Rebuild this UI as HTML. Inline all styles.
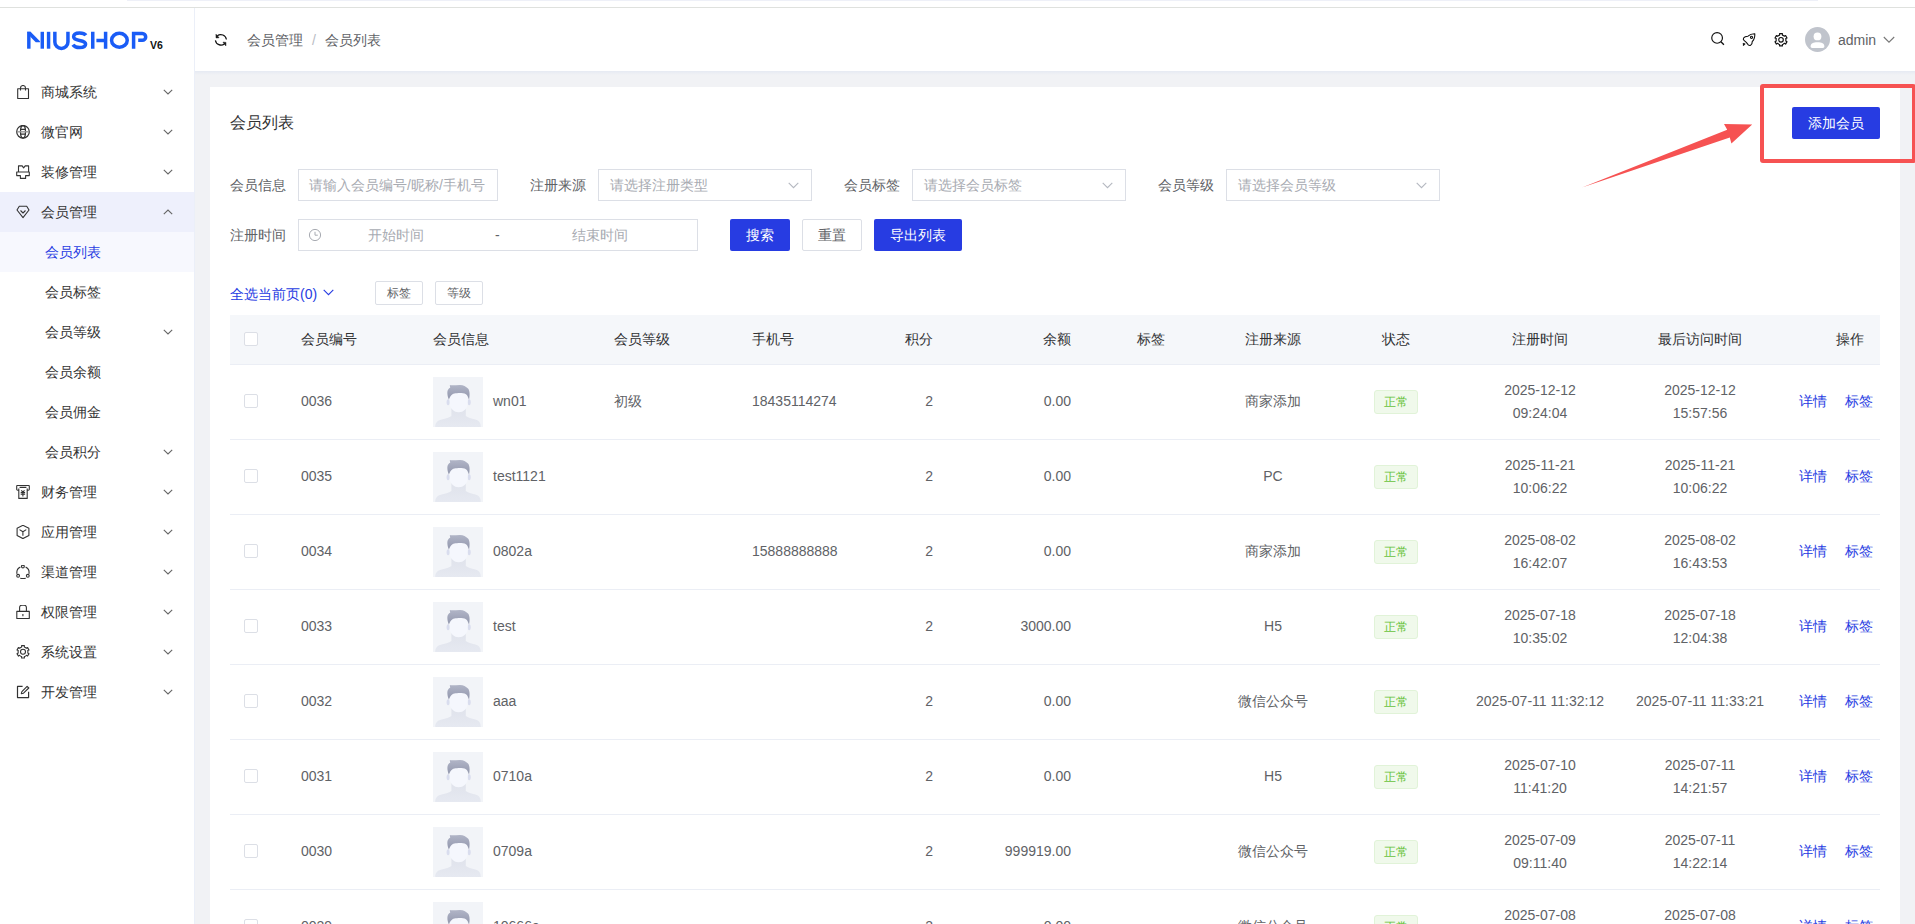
<!DOCTYPE html>
<html><head><meta charset="utf-8"><title>会员列表</title><style>
*{box-sizing:border-box;margin:0;padding:0}
html,body{width:1915px;height:924px;overflow:hidden}
body{position:relative;background:#f1f2f5;font-family:"Liberation Sans",sans-serif;font-size:14px;color:#333}
.a{position:absolute}
.t{position:absolute;white-space:nowrap;line-height:20px;height:20px}
.topbar{left:0;top:0;width:1915px;height:8px;background:#fff;border-bottom:1px solid #dfe1de}
.topstrip{left:127px;top:0;width:1691px;height:1px;background:#eef0f8}
.side{left:0;top:8px;width:195px;height:916px;background:#fff;border-right:1px solid #ebeff8}
.hdr{left:195px;top:8px;width:1720px;height:63px;background:#fff}
.hshadow{left:195px;top:71px;width:1720px;height:4px;background:linear-gradient(#e6eaf3,#f1f2f5)}
.card{left:210px;top:87px;width:1690px;height:837px;background:#fff}
.mi{position:absolute;left:0;width:194px;height:40px}
.mi .tx{position:absolute;left:41px;top:10px;line-height:20px;color:#333;font-size:14px;white-space:nowrap}
.mi.sub .tx{left:45px}
.mi .ic{position:absolute;left:16px;top:13px;width:14px;height:14px}
.mi .ar{position:absolute;left:163px;top:16px;width:10px;height:8px}
.inp{position:absolute;height:32px;border:1px solid #dcdfe6;background:#fff}
.ph{position:absolute;color:#a8abb2;line-height:20px;white-space:nowrap}
.lbl{position:absolute;color:#606266;line-height:20px;white-space:nowrap}
.btn{position:absolute;height:32px;border-radius:2px;background:#273ce2;color:#fff;text-align:center;line-height:32px;font-size:14px}
.btn.pl{background:#fff;border:1px solid #dcdfe6;color:#606266;line-height:30px}
.sbtn{position:absolute;height:24px;width:48px;border:1px solid #dcdfe6;border-radius:2px;background:#fff;color:#606266;font-size:12px;text-align:center;line-height:22px}
.th{position:absolute;left:230px;top:315px;width:1650px;height:50px;background:#f5f7fa;border-bottom:1px solid #ebeef5}
.row{position:absolute;left:230px;width:1650px;height:75px;border-bottom:1px solid #ebeef5;background:#fff}
.cb{position:absolute;width:14px;height:14px;border:1px solid #dcdfe6;border-radius:2px;background:#fff}
.ht{position:absolute;top:15px;line-height:20px;color:#303133;white-space:nowrap}
.c{position:absolute;line-height:20px;color:#606266;white-space:nowrap}
.tag{position:absolute;width:44px;height:24px;border:1px solid #e1f3d8;background:#f0f9eb;color:#67c23a;border-radius:3px;font-size:12px;text-align:center;line-height:22px}
.lnk{position:absolute;color:#273ce2;line-height:20px;white-space:nowrap}
.av{position:absolute;width:50px;height:50px;background:#f1f3f8;overflow:hidden}
</style></head><body>
<div class="a topbar"></div><div class="a topstrip"></div>
<div class="a side"></div>
<div class="a hdr"></div><div class="a hshadow"></div>
<div class="a card"></div>
<svg class="a" style="left:0;top:0" width="195" height="60" viewBox="0 0 195 60">
<g fill="#1a5cf6">
<rect x="27.1" y="31.8" width="3.45" height="16.9"/>
<polygon points="27.1,31.8 30.55,31.8 39.95,41.2 39.95,42.25 35.75,42.25 30.55,36.9"/>
<rect x="40.55" y="31.8" width="3.45" height="16.9"/>
<rect x="46.85" y="31.8" width="3.45" height="16.9"/>
</g>
<g fill="none" stroke="#1a5cf6" stroke-width="3.5">
<path d="M54.85 31.8 V41.9 A6.55 6.55 0 0 0 67.95 41.9 V31.8"/>
<path d="M85.9 35.2 C84.6 33.4 82.2 32.9 79.6 32.9 C76.2 32.9 73.6 34.3 73.6 36.8 C73.6 42.0 85.6 38.9 85.6 44.1 C85.6 46.6 83.1 47.6 79.6 47.6 C76.7 47.6 74.3 46.7 72.9 44.7"/>
<path d="M92.75 31.8 V48.7 M96.4 40.6 H104.5 M105.6 31.8 V48.7"/>
<ellipse cx="119.4" cy="40.25" rx="7.85" ry="6.9"/>
<path d="M133.6 48.7 V33.5 H142.3 A3.4 3.4 0 0 1 142.3 40.3 H138.2"/>
</g>
<text x="150" y="48.8" font-family="Liberation Sans" font-weight="bold" font-size="10.5" fill="#111">V6</text>
</svg>
<div class="mi" style="top:72px;"><div class="tx" style="color:#333">商城系统</div><svg class="ic" viewBox="0 0 14 14" fill="none" stroke="#333" stroke-width="1.1" stroke-linejoin="round"><path d="M1.7 3.8 H12.5 V13.5 H1.7 Z M4.5 5.6 V3 A2.5 2.5 0 0 1 9.5 3 V5.6"/></svg></div>
<svg class="a" style="left:163px;top:89px" width="10" height="6" viewBox="0 0 10 6"><path d="M0.8 0.8 L5 5 L9.2 0.8" fill="none" stroke="#666" stroke-width="1.1"/></svg>
<div class="mi" style="top:112px;"><div class="tx" style="color:#333">微官网</div><svg class="ic" viewBox="0 0 14 14" fill="none" stroke="#333" stroke-width="1.1" stroke-linejoin="round"><g stroke-width="1.25"><circle cx="7" cy="6.8" r="6.3"/><ellipse cx="7" cy="6.8" rx="2.5" ry="6.3"/><path d="M4.6 4.4 H9.4 M4.6 9.2 H9.4"/></g><path d="M0.8 6.8 H13.2" stroke="#999" stroke-width="1.4"/></svg></div>
<svg class="a" style="left:163px;top:129px" width="10" height="6" viewBox="0 0 10 6"><path d="M0.8 0.8 L5 5 L9.2 0.8" fill="none" stroke="#666" stroke-width="1.1"/></svg>
<div class="mi" style="top:152px;"><div class="tx" style="color:#333">装修管理</div><svg class="ic" viewBox="0 0 14 14" fill="none" stroke="#333" stroke-width="1.1" stroke-linejoin="round"><path d="M2.5 7 V0.9 H6.2 L7.6 2.9 L9.2 0.9 H12.6 V7 M0.7 7 H13.3 V10.6 H9.6 V13.4 H4.4 V10.6 H0.7 Z"/></svg></div>
<svg class="a" style="left:163px;top:169px" width="10" height="6" viewBox="0 0 10 6"><path d="M0.8 0.8 L5 5 L9.2 0.8" fill="none" stroke="#666" stroke-width="1.1"/></svg>
<div class="mi" style="top:192px;background:#eef0fc;"><div class="tx" style="color:#333">会员管理</div><svg class="ic" viewBox="0 0 14 14" fill="none" stroke="#333" stroke-width="1.1" stroke-linejoin="round"><path d="M3.3 1.2 H10.7 L13 5 L7 12.6 L1 5 Z M4.5 5.5 L7 8 L9.5 5.5"/></svg></div>
<svg class="a" style="left:163px;top:209px" width="10" height="6" viewBox="0 0 10 6"><path d="M0.8 5.2 L5 1 L9.2 5.2" fill="none" stroke="#666" stroke-width="1.1"/></svg>
<div class="mi sub" style="top:232px;background:#f7f8fe;"><div class="tx" style="color:#273ce2">会员列表</div></div>
<div class="mi sub" style="top:272px;"><div class="tx" style="color:#333">会员标签</div></div>
<div class="mi sub" style="top:312px;"><div class="tx" style="color:#333">会员等级</div></div>
<svg class="a" style="left:163px;top:329px" width="10" height="6" viewBox="0 0 10 6"><path d="M0.8 0.8 L5 5 L9.2 0.8" fill="none" stroke="#666" stroke-width="1.1"/></svg>
<div class="mi sub" style="top:352px;"><div class="tx" style="color:#333">会员余额</div></div>
<div class="mi sub" style="top:392px;"><div class="tx" style="color:#333">会员佣金</div></div>
<div class="mi sub" style="top:432px;"><div class="tx" style="color:#333">会员积分</div></div>
<svg class="a" style="left:163px;top:449px" width="10" height="6" viewBox="0 0 10 6"><path d="M0.8 0.8 L5 5 L9.2 0.8" fill="none" stroke="#666" stroke-width="1.1"/></svg>
<div class="mi" style="top:472px;"><div class="tx" style="color:#333">财务管理</div><svg class="ic" viewBox="0 0 14 14" fill="none" stroke="#333" stroke-width="1.1" stroke-linejoin="round"><path d="M2.8 5.2 H1.6 A0.9 0.9 0 0 1 0.7 4.3 V1.3 A0.9 0.9 0 0 1 1.6 0.4 H12.4 A0.9 0.9 0 0 1 13.3 1.3 V4.3 A0.9 0.9 0 0 1 12.4 5.2 H11.2 M2.8 3.6 V13.4 H11.2 V3.6 M3.6 2.4 H10.4 M5.3 5.3 L6.9 7.2 L8.5 5.3 M4.7 7.6 H9.1 M4.7 9.3 H9.1 M6.9 7.2 V11.6"/></svg></div>
<svg class="a" style="left:163px;top:489px" width="10" height="6" viewBox="0 0 10 6"><path d="M0.8 0.8 L5 5 L9.2 0.8" fill="none" stroke="#666" stroke-width="1.1"/></svg>
<div class="mi" style="top:512px;"><div class="tx" style="color:#333">应用管理</div><svg class="ic" viewBox="0 0 14 14" fill="none" stroke="#333" stroke-width="1.1" stroke-linejoin="round"><path d="M6.9 0.3 L12.9 3.3 V10.6 L6.9 13.6 L1.1 10.6 V3.3 Z M3.5 4.6 L6.9 6.7 L10.3 4.6 M6.9 6.7 V10.8"/></svg></div>
<svg class="a" style="left:163px;top:529px" width="10" height="6" viewBox="0 0 10 6"><path d="M0.8 0.8 L5 5 L9.2 0.8" fill="none" stroke="#666" stroke-width="1.1"/></svg>
<div class="mi" style="top:552px;"><div class="tx" style="color:#333">渠道管理</div><svg class="ic" viewBox="0 0 14 14" fill="none" stroke="#333" stroke-width="1.1" stroke-linejoin="round"><path d="M4.4 2.1 A6.2 6.2 0 0 0 1.0 8.9 M9.6 2.1 A6.2 6.2 0 0 1 12.9 8.9 M4.3 13.2 Q6.9 13.9 9.7 13.2"/><circle cx="6.9" cy="1.5" r="1.4"/><circle cx="2.1" cy="10.8" r="1.4"/><circle cx="11.8" cy="10.8" r="1.4"/></svg></div>
<svg class="a" style="left:163px;top:569px" width="10" height="6" viewBox="0 0 10 6"><path d="M0.8 0.8 L5 5 L9.2 0.8" fill="none" stroke="#666" stroke-width="1.1"/></svg>
<div class="mi" style="top:592px;"><div class="tx" style="color:#333">权限管理</div><svg class="ic" viewBox="0 0 14 14" fill="none" stroke="#333" stroke-width="1.1" stroke-linejoin="round"><path d="M0.8 6.4 H13.3 V13.5 H0.8 Z M3.6 6.4 V2.4 A2.1 2.1 0 0 1 5.7 0.3 H8.3 A2.1 2.1 0 0 1 10.4 2.4 V6.4 M6.9 9 V11.2"/></svg></div>
<svg class="a" style="left:163px;top:609px" width="10" height="6" viewBox="0 0 10 6"><path d="M0.8 0.8 L5 5 L9.2 0.8" fill="none" stroke="#666" stroke-width="1.1"/></svg>
<div class="mi" style="top:632px;"><div class="tx" style="color:#333">系统设置</div><svg class="ic" viewBox="0 0 14 14" fill="none" stroke="#333" stroke-width="1.1" stroke-linejoin="round"><path d="M4.85 2.40 L5.65 2.09 L5.58 0.66 L8.42 0.66 L8.35 2.09 L9.15 2.40 L9.74 2.74 L10.40 3.28 L11.61 2.50 L13.02 4.96 L11.75 5.61 L11.89 6.46 L11.89 7.14 L11.75 7.99 L13.02 8.64 L11.61 11.10 L10.40 10.32 L9.74 10.86 L9.15 11.20 L8.35 11.51 L8.42 12.94 L5.58 12.94 L5.65 11.51 L4.85 11.20 L4.26 10.86 L3.60 10.32 L2.39 11.10 L0.98 8.64 L2.25 7.99 L2.11 7.14 L2.11 6.46 L2.25 5.61 L0.98 4.96 L2.39 2.50 L3.60 3.28 L4.26 2.74 Z"/><circle cx="7" cy="6.8" r="2.5"/></svg></div>
<svg class="a" style="left:163px;top:649px" width="10" height="6" viewBox="0 0 10 6"><path d="M0.8 0.8 L5 5 L9.2 0.8" fill="none" stroke="#666" stroke-width="1.1"/></svg>
<div class="mi" style="top:672px;"><div class="tx" style="color:#333">开发管理</div><svg class="ic" viewBox="0 0 14 14" fill="none" stroke="#333" stroke-width="1.1" stroke-linejoin="round"><path d="M6.6 1.4 H1.5 V12.6 H12.6 V6.8" stroke-width="1.2"/><path d="M5.3 8.6 L5.9 6.6 L11.1 1.3 L12.8 3 L7.5 8.2 Z" stroke-width="1.1"/></svg></div>
<svg class="a" style="left:163px;top:689px" width="10" height="6" viewBox="0 0 10 6"><path d="M0.8 0.8 L5 5 L9.2 0.8" fill="none" stroke="#666" stroke-width="1.1"/></svg>
<svg class="a" style="left:210px;top:29px" width="22" height="22" viewBox="0 0 22 22" fill="none" stroke="#111" stroke-width="1.2">
<path d="M16.4 10.5 A5.7 5.7 0 0 0 7.3 6.8"/><path d="M5.4 11.3 A5.7 5.7 0 0 0 14.4 15.0"/>
<polygon points="6.0,5.3 6.1,8.9 9.0,8.7" fill="#111" stroke-width="0.6"/><polygon points="13.0,13.2 15.9,13.4 15.8,16.8" fill="#111" stroke-width="0.6"/>
</svg>
<div class="t" style="left:247px;top:30px;color:#606266">会员管理</div>
<div class="t" style="left:312px;top:30px;color:#b9bcc4">/</div>
<div class="t" style="left:325px;top:30px;color:#606266">会员列表</div>
<svg class="a" style="left:1709px;top:30px" width="18" height="18" viewBox="0 0 18 18" fill="none" stroke="#111" stroke-width="1.15">
<circle cx="8.1" cy="7.9" r="5.35"/><path d="M11.9 11.8 L14.9 14.8" stroke-width="1.3"/></svg>
<svg class="a" style="left:1741px;top:32px" width="16" height="16" viewBox="0 0 16 16" fill="none" stroke="#111" stroke-width="1.1" stroke-linejoin="round">
<path d="M13.8 1.7 C11.2 1.6 9 2.2 7 4.2 C5 4.2 3.3 4.8 2.6 6 C2.2 6.8 2.3 7.8 3 8.4 L5.3 10.4 L7.3 12.8 C7.9 13.4 8.8 13.6 9.6 13.2 C10.8 12.6 11.3 11.2 11.2 9.7 C13.2 7.6 14 5 13.8 1.7 Z"/>
<circle cx="10.5" cy="5.3" r="1.1"/><path d="M4.2 11.6 L2.1 13.6 M3.3 11.2 L1.8 12.2"/></svg>
<svg class="a" style="left:1773px;top:32px" width="16" height="16" viewBox="0 0 16 16" fill="none" stroke="#111" stroke-width="1.15" stroke-linejoin="round">
<path d="M5.85 3.40 L6.65 3.09 L6.58 1.66 L9.42 1.66 L9.35 3.09 L10.15 3.40 L10.74 3.74 L11.40 4.28 L12.61 3.50 L14.02 5.96 L12.75 6.61 L12.89 7.46 L12.89 8.14 L12.75 8.99 L14.02 9.64 L12.61 12.10 L11.40 11.32 L10.74 11.86 L10.15 12.20 L9.35 12.51 L9.42 13.94 L6.58 13.94 L6.65 12.51 L5.85 12.20 L5.26 11.86 L4.60 11.32 L3.39 12.10 L1.98 9.64 L3.25 8.99 L3.11 8.14 L3.11 7.46 L3.25 6.61 L1.98 5.96 L3.39 3.50 L4.60 4.28 L5.26 3.74 Z"/>
<circle cx="8" cy="7.8" r="2.3"/></svg>
<svg class="a" style="left:1805px;top:27px" width="25" height="25" viewBox="0 0 25 25">
<circle cx="12.5" cy="12.5" r="12.5" fill="#c0c4cc"/>
<circle cx="12.5" cy="9.4" r="3.9" fill="#fff"/>
<path d="M5.6 19.5 C5.6 16.4 8.2 15.3 12.5 15.3 C16.8 15.3 19.4 16.4 19.4 19.5 C19.4 20.4 18.8 20.9 17.9 20.9 H7.1 C6.2 20.9 5.6 20.4 5.6 19.5 Z" fill="#fff"/></svg>
<div class="t" style="left:1838px;top:30px;color:#606266;font-size:14px">admin</div>
<svg class="a" style="left:1883px;top:36px" width="12" height="8" viewBox="0 0 12 8"><path d="M0.8 1 L6 6.2 L11.2 1" fill="none" stroke="#777" stroke-width="1.1"/></svg>
<div class="t" style="left:230px;top:113px;font-size:16px;line-height:20px;color:#303133">会员列表</div>
<div class="btn" style="left:1792px;top:107px;width:88px">添加会员</div>
<div class="lbl" style="left:230px;top:175px">会员信息</div>
<div class="inp" style="left:298px;top:169px;width:200px"></div>
<div class="ph" style="left:309px;top:175px">请输入会员编号/昵称/手机号</div>
<div class="lbl" style="left:530px;top:175px">注册来源</div>
<div class="inp" style="left:598px;top:169px;width:214px"></div>
<div class="ph" style="left:610px;top:175px">请选择注册类型</div>
<svg class="a" style="left:787.5px;top:181.5px" width="11" height="7" viewBox="0 0 11 7"><path d="M0.7 0.9 L5.5 5.7 L10.3 0.9" fill="none" stroke="#b4b8c0" stroke-width="1.1"/></svg>
<div class="lbl" style="left:844px;top:175px">会员标签</div>
<div class="inp" style="left:912px;top:169px;width:214px"></div>
<div class="ph" style="left:924px;top:175px">请选择会员标签</div>
<svg class="a" style="left:1101.5px;top:181.5px" width="11" height="7" viewBox="0 0 11 7"><path d="M0.7 0.9 L5.5 5.7 L10.3 0.9" fill="none" stroke="#b4b8c0" stroke-width="1.1"/></svg>
<div class="lbl" style="left:1158px;top:175px">会员等级</div>
<div class="inp" style="left:1226px;top:169px;width:214px"></div>
<div class="ph" style="left:1238px;top:175px">请选择会员等级</div>
<svg class="a" style="left:1415.5px;top:181.5px" width="11" height="7" viewBox="0 0 11 7"><path d="M0.7 0.9 L5.5 5.7 L10.3 0.9" fill="none" stroke="#b4b8c0" stroke-width="1.1"/></svg>
<div class="lbl" style="left:230px;top:225px">注册时间</div>
<div class="inp" style="left:298px;top:219px;width:400px"></div>
<svg class="a" style="left:308px;top:228px" width="14" height="14" viewBox="0 0 14 14" fill="none" stroke="#a8abb2" stroke-width="1"><circle cx="7" cy="7" r="5.6"/><path d="M7 3.8 V7.2 H9.8"/></svg>
<div class="ph" style="left:368px;top:225px">开始时间</div>
<div class="ph" style="left:495px;top:225px;color:#606266">-</div>
<div class="ph" style="left:572px;top:225px">结束时间</div>
<div class="btn" style="left:730px;top:219px;width:60px">搜索</div>
<div class="btn pl" style="left:802px;top:219px;width:60px">重置</div>
<div class="btn" style="left:874px;top:219px;width:88px">导出列表</div>
<div class="t" style="left:230px;top:284px;color:#273ce2">全选当前页(0)</div>
<svg class="a" style="left:323px;top:289px" width="11" height="7" viewBox="0 0 11 7"><path d="M0.7 0.9 L5.5 5.7 L10.3 0.9" fill="none" stroke="#273ce2" stroke-width="1.1"/></svg>
<div class="sbtn" style="left:375px;top:281px">标签</div>
<div class="sbtn" style="left:435px;top:281px">等级</div>
<div class="th"></div>
<div class="cb" style="left:244px;top:332px"></div>
<div class="ht" style="left:301px;top:329px;">会员编号</div>
<div class="ht" style="left:433px;top:329px;">会员信息</div>
<div class="ht" style="left:614px;top:329px;">会员等级</div>
<div class="ht" style="left:752px;top:329px;">手机号</div>
<div class="ht" style="left:733px;top:329px;width:200px;text-align:right;">积分</div>
<div class="ht" style="left:871px;top:329px;width:200px;text-align:right;">余额</div>
<div class="ht" style="left:1137px;top:329px;">标签</div>
<div class="ht" style="left:1123px;top:329px;width:300px;text-align:center;">注册来源</div>
<div class="ht" style="left:1246px;top:329px;width:300px;text-align:center;">状态</div>
<div class="ht" style="left:1390px;top:329px;width:300px;text-align:center;">注册时间</div>
<div class="ht" style="left:1550px;top:329px;width:300px;text-align:center;">最后访问时间</div>
<div class="ht" style="left:1664px;top:329px;width:200px;text-align:right;">操作</div>
<div class="row" style="top:365px"></div>
<div class="cb" style="left:244px;top:394px"></div>
<div class="c" style="left:301px;top:391px;">0036</div>
<div class="av" style="left:433px;top:377px"><svg width="50" height="50" viewBox="0 0 50 50">
<defs><linearGradient id="hg0" x1="0" y1="0" x2="0" y2="1"><stop offset="0" stop-color="#b1b5c7"/><stop offset="1" stop-color="#9196ac"/></linearGradient>
<linearGradient id="bg0" x1="0" y1="0" x2="0" y2="1"><stop offset="0" stop-color="#dfe2eb"/><stop offset="1" stop-color="#e6e9f1"/></linearGradient></defs>
<rect width="50" height="50" fill="#f2f4f8"/>
<path d="M18.4 29 H32.8 V39 C34.5 40.6 38.5 41.6 42.3 42.5 C46.3 43.5 47.8 46 47.8 50 H2.2 C2.2 46 4 43.5 8.7 42.5 C12.6 41.6 16.7 40.6 18.4 39 Z" fill="url(#bg0)"/>
<ellipse cx="15.1" cy="25.2" rx="1.5" ry="3" fill="#d9ddee"/><ellipse cx="36.2" cy="25.2" rx="1.5" ry="3" fill="#d9ddee"/>
<path d="M16.9 22 C16.9 17.5 20.5 15.8 25.7 15.8 C30.9 15.8 34.6 17.5 34.6 22 V27 C34.6 31.5 30.5 35.3 25.7 35.3 C20.9 35.3 16.9 31.5 16.9 27 Z" fill="#f5f7fd"/>
<path d="M15.9 22.5 C14.3 19 13.8 14.5 15.2 12.6 C15.8 11.6 16.5 11 17.2 10.8 L16.8 8.1 C19.5 8.6 23 7.9 27 7.9 C30.5 7.9 33 9.5 35 11.5 C36.8 13.4 37 18 36 22.7 C35.4 20.5 34.6 18.5 33 17.2 C30.5 16 27 16 24 16.2 C22 16.3 20.5 16.5 19.5 17.3 C17.8 18.5 16.6 20.5 15.9 22.5 Z" fill="url(#hg0)"/>
</svg></div>
<div class="c" style="left:493px;top:391px;">wn01</div>
<div class="c" style="left:614px;top:391px;">初级</div>
<div class="c" style="left:752px;top:391px;">18435114274</div>
<div class="c" style="left:733px;top:391px;width:200px;text-align:right;">2</div>
<div class="c" style="left:871px;top:391px;width:200px;text-align:right;">0.00</div>
<div class="c" style="left:1123px;top:391px;width:300px;text-align:center;">商家添加</div>
<div class="tag" style="left:1374px;top:390px">正常</div>
<div class="c" style="left:1390px;top:380px;width:300px;text-align:center;">2025-12-12</div>
<div class="c" style="left:1390px;top:403px;width:300px;text-align:center;">09:24:04</div>
<div class="c" style="left:1550px;top:380px;width:300px;text-align:center;">2025-12-12</div>
<div class="c" style="left:1550px;top:403px;width:300px;text-align:center;">15:57:56</div>
<div class="lnk" style="left:1799px;top:391px;">详情</div>
<div class="lnk" style="left:1845px;top:391px;">标签</div>
<div class="row" style="top:440px"></div>
<div class="cb" style="left:244px;top:469px"></div>
<div class="c" style="left:301px;top:466px;">0035</div>
<div class="av" style="left:433px;top:452px"><svg width="50" height="50" viewBox="0 0 50 50">
<defs><linearGradient id="hg1" x1="0" y1="0" x2="0" y2="1"><stop offset="0" stop-color="#b1b5c7"/><stop offset="1" stop-color="#9196ac"/></linearGradient>
<linearGradient id="bg1" x1="0" y1="0" x2="0" y2="1"><stop offset="0" stop-color="#dfe2eb"/><stop offset="1" stop-color="#e6e9f1"/></linearGradient></defs>
<rect width="50" height="50" fill="#f2f4f8"/>
<path d="M18.4 29 H32.8 V39 C34.5 40.6 38.5 41.6 42.3 42.5 C46.3 43.5 47.8 46 47.8 50 H2.2 C2.2 46 4 43.5 8.7 42.5 C12.6 41.6 16.7 40.6 18.4 39 Z" fill="url(#bg1)"/>
<ellipse cx="15.1" cy="25.2" rx="1.5" ry="3" fill="#d9ddee"/><ellipse cx="36.2" cy="25.2" rx="1.5" ry="3" fill="#d9ddee"/>
<path d="M16.9 22 C16.9 17.5 20.5 15.8 25.7 15.8 C30.9 15.8 34.6 17.5 34.6 22 V27 C34.6 31.5 30.5 35.3 25.7 35.3 C20.9 35.3 16.9 31.5 16.9 27 Z" fill="#f5f7fd"/>
<path d="M15.9 22.5 C14.3 19 13.8 14.5 15.2 12.6 C15.8 11.6 16.5 11 17.2 10.8 L16.8 8.1 C19.5 8.6 23 7.9 27 7.9 C30.5 7.9 33 9.5 35 11.5 C36.8 13.4 37 18 36 22.7 C35.4 20.5 34.6 18.5 33 17.2 C30.5 16 27 16 24 16.2 C22 16.3 20.5 16.5 19.5 17.3 C17.8 18.5 16.6 20.5 15.9 22.5 Z" fill="url(#hg1)"/>
</svg></div>
<div class="c" style="left:493px;top:466px;">test1121</div>
<div class="c" style="left:733px;top:466px;width:200px;text-align:right;">2</div>
<div class="c" style="left:871px;top:466px;width:200px;text-align:right;">0.00</div>
<div class="c" style="left:1123px;top:466px;width:300px;text-align:center;">PC</div>
<div class="tag" style="left:1374px;top:465px">正常</div>
<div class="c" style="left:1390px;top:455px;width:300px;text-align:center;">2025-11-21</div>
<div class="c" style="left:1390px;top:478px;width:300px;text-align:center;">10:06:22</div>
<div class="c" style="left:1550px;top:455px;width:300px;text-align:center;">2025-11-21</div>
<div class="c" style="left:1550px;top:478px;width:300px;text-align:center;">10:06:22</div>
<div class="lnk" style="left:1799px;top:466px;">详情</div>
<div class="lnk" style="left:1845px;top:466px;">标签</div>
<div class="row" style="top:515px"></div>
<div class="cb" style="left:244px;top:544px"></div>
<div class="c" style="left:301px;top:541px;">0034</div>
<div class="av" style="left:433px;top:527px"><svg width="50" height="50" viewBox="0 0 50 50">
<defs><linearGradient id="hg2" x1="0" y1="0" x2="0" y2="1"><stop offset="0" stop-color="#b1b5c7"/><stop offset="1" stop-color="#9196ac"/></linearGradient>
<linearGradient id="bg2" x1="0" y1="0" x2="0" y2="1"><stop offset="0" stop-color="#dfe2eb"/><stop offset="1" stop-color="#e6e9f1"/></linearGradient></defs>
<rect width="50" height="50" fill="#f2f4f8"/>
<path d="M18.4 29 H32.8 V39 C34.5 40.6 38.5 41.6 42.3 42.5 C46.3 43.5 47.8 46 47.8 50 H2.2 C2.2 46 4 43.5 8.7 42.5 C12.6 41.6 16.7 40.6 18.4 39 Z" fill="url(#bg2)"/>
<ellipse cx="15.1" cy="25.2" rx="1.5" ry="3" fill="#d9ddee"/><ellipse cx="36.2" cy="25.2" rx="1.5" ry="3" fill="#d9ddee"/>
<path d="M16.9 22 C16.9 17.5 20.5 15.8 25.7 15.8 C30.9 15.8 34.6 17.5 34.6 22 V27 C34.6 31.5 30.5 35.3 25.7 35.3 C20.9 35.3 16.9 31.5 16.9 27 Z" fill="#f5f7fd"/>
<path d="M15.9 22.5 C14.3 19 13.8 14.5 15.2 12.6 C15.8 11.6 16.5 11 17.2 10.8 L16.8 8.1 C19.5 8.6 23 7.9 27 7.9 C30.5 7.9 33 9.5 35 11.5 C36.8 13.4 37 18 36 22.7 C35.4 20.5 34.6 18.5 33 17.2 C30.5 16 27 16 24 16.2 C22 16.3 20.5 16.5 19.5 17.3 C17.8 18.5 16.6 20.5 15.9 22.5 Z" fill="url(#hg2)"/>
</svg></div>
<div class="c" style="left:493px;top:541px;">0802a</div>
<div class="c" style="left:752px;top:541px;">15888888888</div>
<div class="c" style="left:733px;top:541px;width:200px;text-align:right;">2</div>
<div class="c" style="left:871px;top:541px;width:200px;text-align:right;">0.00</div>
<div class="c" style="left:1123px;top:541px;width:300px;text-align:center;">商家添加</div>
<div class="tag" style="left:1374px;top:540px">正常</div>
<div class="c" style="left:1390px;top:530px;width:300px;text-align:center;">2025-08-02</div>
<div class="c" style="left:1390px;top:553px;width:300px;text-align:center;">16:42:07</div>
<div class="c" style="left:1550px;top:530px;width:300px;text-align:center;">2025-08-02</div>
<div class="c" style="left:1550px;top:553px;width:300px;text-align:center;">16:43:53</div>
<div class="lnk" style="left:1799px;top:541px;">详情</div>
<div class="lnk" style="left:1845px;top:541px;">标签</div>
<div class="row" style="top:590px"></div>
<div class="cb" style="left:244px;top:619px"></div>
<div class="c" style="left:301px;top:616px;">0033</div>
<div class="av" style="left:433px;top:602px"><svg width="50" height="50" viewBox="0 0 50 50">
<defs><linearGradient id="hg3" x1="0" y1="0" x2="0" y2="1"><stop offset="0" stop-color="#b1b5c7"/><stop offset="1" stop-color="#9196ac"/></linearGradient>
<linearGradient id="bg3" x1="0" y1="0" x2="0" y2="1"><stop offset="0" stop-color="#dfe2eb"/><stop offset="1" stop-color="#e6e9f1"/></linearGradient></defs>
<rect width="50" height="50" fill="#f2f4f8"/>
<path d="M18.4 29 H32.8 V39 C34.5 40.6 38.5 41.6 42.3 42.5 C46.3 43.5 47.8 46 47.8 50 H2.2 C2.2 46 4 43.5 8.7 42.5 C12.6 41.6 16.7 40.6 18.4 39 Z" fill="url(#bg3)"/>
<ellipse cx="15.1" cy="25.2" rx="1.5" ry="3" fill="#d9ddee"/><ellipse cx="36.2" cy="25.2" rx="1.5" ry="3" fill="#d9ddee"/>
<path d="M16.9 22 C16.9 17.5 20.5 15.8 25.7 15.8 C30.9 15.8 34.6 17.5 34.6 22 V27 C34.6 31.5 30.5 35.3 25.7 35.3 C20.9 35.3 16.9 31.5 16.9 27 Z" fill="#f5f7fd"/>
<path d="M15.9 22.5 C14.3 19 13.8 14.5 15.2 12.6 C15.8 11.6 16.5 11 17.2 10.8 L16.8 8.1 C19.5 8.6 23 7.9 27 7.9 C30.5 7.9 33 9.5 35 11.5 C36.8 13.4 37 18 36 22.7 C35.4 20.5 34.6 18.5 33 17.2 C30.5 16 27 16 24 16.2 C22 16.3 20.5 16.5 19.5 17.3 C17.8 18.5 16.6 20.5 15.9 22.5 Z" fill="url(#hg3)"/>
</svg></div>
<div class="c" style="left:493px;top:616px;">test</div>
<div class="c" style="left:733px;top:616px;width:200px;text-align:right;">2</div>
<div class="c" style="left:871px;top:616px;width:200px;text-align:right;">3000.00</div>
<div class="c" style="left:1123px;top:616px;width:300px;text-align:center;">H5</div>
<div class="tag" style="left:1374px;top:615px">正常</div>
<div class="c" style="left:1390px;top:605px;width:300px;text-align:center;">2025-07-18</div>
<div class="c" style="left:1390px;top:628px;width:300px;text-align:center;">10:35:02</div>
<div class="c" style="left:1550px;top:605px;width:300px;text-align:center;">2025-07-18</div>
<div class="c" style="left:1550px;top:628px;width:300px;text-align:center;">12:04:38</div>
<div class="lnk" style="left:1799px;top:616px;">详情</div>
<div class="lnk" style="left:1845px;top:616px;">标签</div>
<div class="row" style="top:665px"></div>
<div class="cb" style="left:244px;top:694px"></div>
<div class="c" style="left:301px;top:691px;">0032</div>
<div class="av" style="left:433px;top:677px"><svg width="50" height="50" viewBox="0 0 50 50">
<defs><linearGradient id="hg4" x1="0" y1="0" x2="0" y2="1"><stop offset="0" stop-color="#b1b5c7"/><stop offset="1" stop-color="#9196ac"/></linearGradient>
<linearGradient id="bg4" x1="0" y1="0" x2="0" y2="1"><stop offset="0" stop-color="#dfe2eb"/><stop offset="1" stop-color="#e6e9f1"/></linearGradient></defs>
<rect width="50" height="50" fill="#f2f4f8"/>
<path d="M18.4 29 H32.8 V39 C34.5 40.6 38.5 41.6 42.3 42.5 C46.3 43.5 47.8 46 47.8 50 H2.2 C2.2 46 4 43.5 8.7 42.5 C12.6 41.6 16.7 40.6 18.4 39 Z" fill="url(#bg4)"/>
<ellipse cx="15.1" cy="25.2" rx="1.5" ry="3" fill="#d9ddee"/><ellipse cx="36.2" cy="25.2" rx="1.5" ry="3" fill="#d9ddee"/>
<path d="M16.9 22 C16.9 17.5 20.5 15.8 25.7 15.8 C30.9 15.8 34.6 17.5 34.6 22 V27 C34.6 31.5 30.5 35.3 25.7 35.3 C20.9 35.3 16.9 31.5 16.9 27 Z" fill="#f5f7fd"/>
<path d="M15.9 22.5 C14.3 19 13.8 14.5 15.2 12.6 C15.8 11.6 16.5 11 17.2 10.8 L16.8 8.1 C19.5 8.6 23 7.9 27 7.9 C30.5 7.9 33 9.5 35 11.5 C36.8 13.4 37 18 36 22.7 C35.4 20.5 34.6 18.5 33 17.2 C30.5 16 27 16 24 16.2 C22 16.3 20.5 16.5 19.5 17.3 C17.8 18.5 16.6 20.5 15.9 22.5 Z" fill="url(#hg4)"/>
</svg></div>
<div class="c" style="left:493px;top:691px;">aaa</div>
<div class="c" style="left:733px;top:691px;width:200px;text-align:right;">2</div>
<div class="c" style="left:871px;top:691px;width:200px;text-align:right;">0.00</div>
<div class="c" style="left:1123px;top:691px;width:300px;text-align:center;">微信公众号</div>
<div class="tag" style="left:1374px;top:690px">正常</div>
<div class="c" style="left:1390px;top:691px;width:300px;text-align:center;">2025-07-11 11:32:12</div>
<div class="c" style="left:1550px;top:691px;width:300px;text-align:center;">2025-07-11 11:33:21</div>
<div class="lnk" style="left:1799px;top:691px;">详情</div>
<div class="lnk" style="left:1845px;top:691px;">标签</div>
<div class="row" style="top:740px"></div>
<div class="cb" style="left:244px;top:769px"></div>
<div class="c" style="left:301px;top:766px;">0031</div>
<div class="av" style="left:433px;top:752px"><svg width="50" height="50" viewBox="0 0 50 50">
<defs><linearGradient id="hg5" x1="0" y1="0" x2="0" y2="1"><stop offset="0" stop-color="#b1b5c7"/><stop offset="1" stop-color="#9196ac"/></linearGradient>
<linearGradient id="bg5" x1="0" y1="0" x2="0" y2="1"><stop offset="0" stop-color="#dfe2eb"/><stop offset="1" stop-color="#e6e9f1"/></linearGradient></defs>
<rect width="50" height="50" fill="#f2f4f8"/>
<path d="M18.4 29 H32.8 V39 C34.5 40.6 38.5 41.6 42.3 42.5 C46.3 43.5 47.8 46 47.8 50 H2.2 C2.2 46 4 43.5 8.7 42.5 C12.6 41.6 16.7 40.6 18.4 39 Z" fill="url(#bg5)"/>
<ellipse cx="15.1" cy="25.2" rx="1.5" ry="3" fill="#d9ddee"/><ellipse cx="36.2" cy="25.2" rx="1.5" ry="3" fill="#d9ddee"/>
<path d="M16.9 22 C16.9 17.5 20.5 15.8 25.7 15.8 C30.9 15.8 34.6 17.5 34.6 22 V27 C34.6 31.5 30.5 35.3 25.7 35.3 C20.9 35.3 16.9 31.5 16.9 27 Z" fill="#f5f7fd"/>
<path d="M15.9 22.5 C14.3 19 13.8 14.5 15.2 12.6 C15.8 11.6 16.5 11 17.2 10.8 L16.8 8.1 C19.5 8.6 23 7.9 27 7.9 C30.5 7.9 33 9.5 35 11.5 C36.8 13.4 37 18 36 22.7 C35.4 20.5 34.6 18.5 33 17.2 C30.5 16 27 16 24 16.2 C22 16.3 20.5 16.5 19.5 17.3 C17.8 18.5 16.6 20.5 15.9 22.5 Z" fill="url(#hg5)"/>
</svg></div>
<div class="c" style="left:493px;top:766px;">0710a</div>
<div class="c" style="left:733px;top:766px;width:200px;text-align:right;">2</div>
<div class="c" style="left:871px;top:766px;width:200px;text-align:right;">0.00</div>
<div class="c" style="left:1123px;top:766px;width:300px;text-align:center;">H5</div>
<div class="tag" style="left:1374px;top:765px">正常</div>
<div class="c" style="left:1390px;top:755px;width:300px;text-align:center;">2025-07-10</div>
<div class="c" style="left:1390px;top:778px;width:300px;text-align:center;">11:41:20</div>
<div class="c" style="left:1550px;top:755px;width:300px;text-align:center;">2025-07-11</div>
<div class="c" style="left:1550px;top:778px;width:300px;text-align:center;">14:21:57</div>
<div class="lnk" style="left:1799px;top:766px;">详情</div>
<div class="lnk" style="left:1845px;top:766px;">标签</div>
<div class="row" style="top:815px"></div>
<div class="cb" style="left:244px;top:844px"></div>
<div class="c" style="left:301px;top:841px;">0030</div>
<div class="av" style="left:433px;top:827px"><svg width="50" height="50" viewBox="0 0 50 50">
<defs><linearGradient id="hg6" x1="0" y1="0" x2="0" y2="1"><stop offset="0" stop-color="#b1b5c7"/><stop offset="1" stop-color="#9196ac"/></linearGradient>
<linearGradient id="bg6" x1="0" y1="0" x2="0" y2="1"><stop offset="0" stop-color="#dfe2eb"/><stop offset="1" stop-color="#e6e9f1"/></linearGradient></defs>
<rect width="50" height="50" fill="#f2f4f8"/>
<path d="M18.4 29 H32.8 V39 C34.5 40.6 38.5 41.6 42.3 42.5 C46.3 43.5 47.8 46 47.8 50 H2.2 C2.2 46 4 43.5 8.7 42.5 C12.6 41.6 16.7 40.6 18.4 39 Z" fill="url(#bg6)"/>
<ellipse cx="15.1" cy="25.2" rx="1.5" ry="3" fill="#d9ddee"/><ellipse cx="36.2" cy="25.2" rx="1.5" ry="3" fill="#d9ddee"/>
<path d="M16.9 22 C16.9 17.5 20.5 15.8 25.7 15.8 C30.9 15.8 34.6 17.5 34.6 22 V27 C34.6 31.5 30.5 35.3 25.7 35.3 C20.9 35.3 16.9 31.5 16.9 27 Z" fill="#f5f7fd"/>
<path d="M15.9 22.5 C14.3 19 13.8 14.5 15.2 12.6 C15.8 11.6 16.5 11 17.2 10.8 L16.8 8.1 C19.5 8.6 23 7.9 27 7.9 C30.5 7.9 33 9.5 35 11.5 C36.8 13.4 37 18 36 22.7 C35.4 20.5 34.6 18.5 33 17.2 C30.5 16 27 16 24 16.2 C22 16.3 20.5 16.5 19.5 17.3 C17.8 18.5 16.6 20.5 15.9 22.5 Z" fill="url(#hg6)"/>
</svg></div>
<div class="c" style="left:493px;top:841px;">0709a</div>
<div class="c" style="left:733px;top:841px;width:200px;text-align:right;">2</div>
<div class="c" style="left:871px;top:841px;width:200px;text-align:right;">999919.00</div>
<div class="c" style="left:1123px;top:841px;width:300px;text-align:center;">微信公众号</div>
<div class="tag" style="left:1374px;top:840px">正常</div>
<div class="c" style="left:1390px;top:830px;width:300px;text-align:center;">2025-07-09</div>
<div class="c" style="left:1390px;top:853px;width:300px;text-align:center;">09:11:40</div>
<div class="c" style="left:1550px;top:830px;width:300px;text-align:center;">2025-07-11</div>
<div class="c" style="left:1550px;top:853px;width:300px;text-align:center;">14:22:14</div>
<div class="lnk" style="left:1799px;top:841px;">详情</div>
<div class="lnk" style="left:1845px;top:841px;">标签</div>
<div class="row" style="top:890px"></div>
<div class="cb" style="left:244px;top:919px"></div>
<div class="c" style="left:301px;top:916px;">0029</div>
<div class="av" style="left:433px;top:902px"><svg width="50" height="50" viewBox="0 0 50 50">
<defs><linearGradient id="hg7" x1="0" y1="0" x2="0" y2="1"><stop offset="0" stop-color="#b1b5c7"/><stop offset="1" stop-color="#9196ac"/></linearGradient>
<linearGradient id="bg7" x1="0" y1="0" x2="0" y2="1"><stop offset="0" stop-color="#dfe2eb"/><stop offset="1" stop-color="#e6e9f1"/></linearGradient></defs>
<rect width="50" height="50" fill="#f2f4f8"/>
<path d="M18.4 29 H32.8 V39 C34.5 40.6 38.5 41.6 42.3 42.5 C46.3 43.5 47.8 46 47.8 50 H2.2 C2.2 46 4 43.5 8.7 42.5 C12.6 41.6 16.7 40.6 18.4 39 Z" fill="url(#bg7)"/>
<ellipse cx="15.1" cy="25.2" rx="1.5" ry="3" fill="#d9ddee"/><ellipse cx="36.2" cy="25.2" rx="1.5" ry="3" fill="#d9ddee"/>
<path d="M16.9 22 C16.9 17.5 20.5 15.8 25.7 15.8 C30.9 15.8 34.6 17.5 34.6 22 V27 C34.6 31.5 30.5 35.3 25.7 35.3 C20.9 35.3 16.9 31.5 16.9 27 Z" fill="#f5f7fd"/>
<path d="M15.9 22.5 C14.3 19 13.8 14.5 15.2 12.6 C15.8 11.6 16.5 11 17.2 10.8 L16.8 8.1 C19.5 8.6 23 7.9 27 7.9 C30.5 7.9 33 9.5 35 11.5 C36.8 13.4 37 18 36 22.7 C35.4 20.5 34.6 18.5 33 17.2 C30.5 16 27 16 24 16.2 C22 16.3 20.5 16.5 19.5 17.3 C17.8 18.5 16.6 20.5 15.9 22.5 Z" fill="url(#hg7)"/>
</svg></div>
<div class="c" style="left:493px;top:916px;">10666a</div>
<div class="c" style="left:733px;top:916px;width:200px;text-align:right;">2</div>
<div class="c" style="left:871px;top:916px;width:200px;text-align:right;">0.00</div>
<div class="c" style="left:1123px;top:916px;width:300px;text-align:center;">微信公众号</div>
<div class="tag" style="left:1374px;top:915px">正常</div>
<div class="c" style="left:1390px;top:905px;width:300px;text-align:center;">2025-07-08</div>
<div class="c" style="left:1390px;top:928px;width:300px;text-align:center;">10:26:53</div>
<div class="c" style="left:1550px;top:905px;width:300px;text-align:center;">2025-07-08</div>
<div class="c" style="left:1550px;top:928px;width:300px;text-align:center;">10:26:53</div>
<div class="lnk" style="left:1799px;top:916px;">详情</div>
<div class="lnk" style="left:1845px;top:916px;">标签</div>
<div class="a" style="left:1760px;top:84px;width:156px;height:79px;border:4px solid #f65252;border-radius:3px"></div>
<svg class="a" style="left:0;top:0;pointer-events:none" width="1915" height="924" viewBox="0 0 1915 924"><polygon points="1582,187.5 1727.2,129.8 1724,124.1 1752.2,124.6 1731.4,143.4 1729.8,137.4" fill="#f65252"/></svg>
</body></html>
